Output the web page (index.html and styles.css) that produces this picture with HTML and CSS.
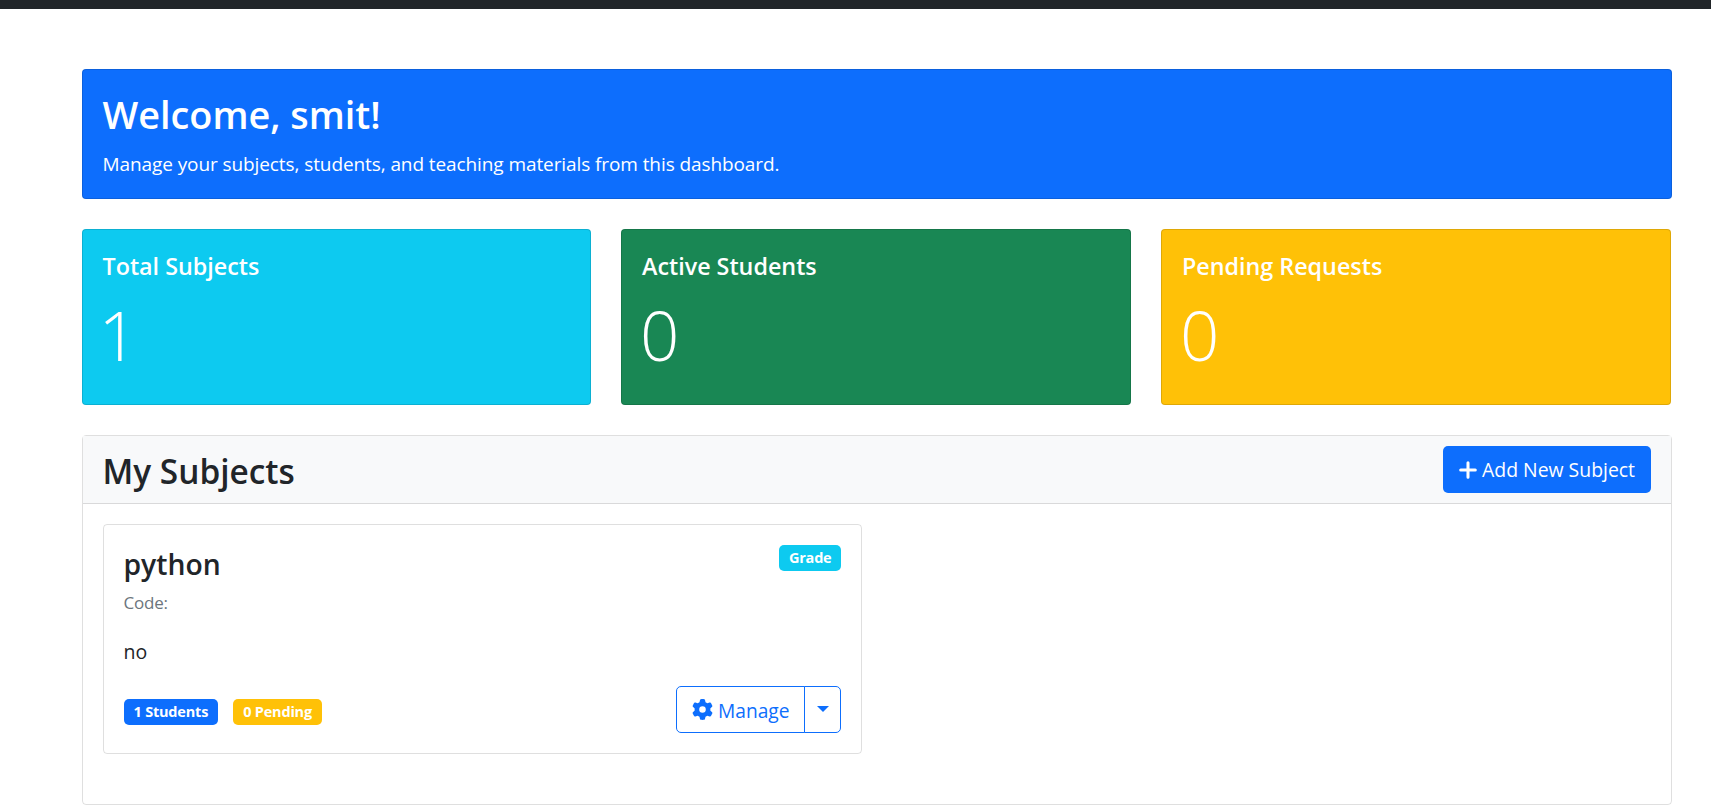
FILE: index.html
```html
<!DOCTYPE html>
<html lang="en">
<head>
<meta charset="utf-8">
<title>Teacher Dashboard</title>
<link rel="stylesheet" href="styles.css">
</head>
<body>
<div class="topbar"></div>
<main class="container">
  <section class="card welcome">
    <h1 class="welcome-title">Welcome, smit!</h1>
    <p class="welcome-text">Manage your subjects, students, and teaching materials from this dashboard.</p>
  </section>
  <section class="stats">
    <div class="card stat stat-info"><h5 class="stat-title">Total Subjects</h5><div class="stat-value">1</div></div>
    <div class="card stat stat-success"><h5 class="stat-title">Active Students</h5><div class="stat-value">0</div></div>
    <div class="card stat stat-warning"><h5 class="stat-title">Pending Requests</h5><div class="stat-value">0</div></div>
  </section>
  <section class="card subjects">
    <header class="subjects-header">
      <h3 class="subjects-title">My Subjects</h3>
      <button class="btn-add"><svg class="icon-plus" viewBox="0 0 16 16" aria-hidden="true"><path d="M8 1.5v13M1.5 8h13" fill="none" stroke="currentColor" stroke-width="2.7" stroke-linecap="round"/></svg>Add New Subject</button>
    </header>
    <div class="subjects-body">
      <article class="card subject">
        <div class="subject-top">
          <div>
            <h4 class="subject-name">python</h4>
            <div class="subject-code">Code:</div>
          </div>
          <span class="badge badge-info">Grade</span>
        </div>
        <p class="subject-desc">no</p>
        <div class="subject-foot">
          <div class="badges">
            <span class="badge badge-primary">1 Students</span>
            <span class="badge badge-warning">0 Pending</span>
          </div>
          <div class="btn-group">
            <button class="btn-manage"><svg class="icon-gear" viewBox="0 0 512 512" aria-hidden="true"><path fill="currentColor" d="M495.9 166.6c3.2 8.7.5 18.4-6.4 24.6l-43.3 39.4c1.1 8.3 1.7 16.8 1.7 25.4s-.6 17.1-1.7 25.4l43.3 39.4c6.9 6.2 9.6 15.9 6.4 24.6-4.4 11.9-9.7 23.3-15.8 34.3l-4.7 8.1c-6.6 11-14 21.4-22.1 31.2-5.9 7.2-15.7 9.6-24.5 6.8l-55.7-17.7c-13.4 10.3-28.2 18.9-44 25.4l-12.5 57.1c-2 9.1-9 16.3-18.2 17.8-13.8 2.3-28 3.5-42.5 3.5s-28.7-1.2-42.5-3.5c-9.2-1.5-16.2-8.7-18.2-17.8l-12.5-57.1c-15.8-6.5-30.6-15.1-44-25.4l-55.6 17.8c-8.8 2.8-18.6.3-24.5-6.8-8.1-9.8-15.5-20.2-22.1-31.2l-4.7-8.1c-6.1-11-11.4-22.4-15.8-34.3-3.2-8.7-.5-18.4 6.4-24.6l43.3-39.4c-1.1-8.4-1.7-16.9-1.7-25.5s.6-17.1 1.7-25.4l-43.3-39.4c-6.9-6.2-9.6-15.9-6.4-24.6 4.4-11.9 9.7-23.3 15.8-34.3l4.7-8.1c6.6-11 14-21.4 22.1-31.2 5.9-7.2 15.7-9.6 24.5-6.8l55.7 17.7c13.4-10.3 28.2-18.9 44-25.4l12.5-57.1c2-9.1 9-16.3 18.2-17.8C227.3 1.2 241.5 0 256 0s28.7 1.2 42.5 3.5c9.2 1.5 16.2 8.7 18.2 17.8l12.5 57.1c15.8 6.5 30.6 15.1 44 25.4l55.7-17.7c8.8-2.8 18.6-.3 24.5 6.8 8.1 9.8 15.5 20.2 22.1 31.2l4.7 8.1c6.1 11 11.4 22.4 15.8 34.3zM256 336a80 80 0 1 0 0-160 80 80 0 1 0 0 160z"/></svg>Manage</button>
            <button class="btn-caret" aria-label="Toggle menu"><span class="caret"></span></button>
          </div>
        </div>
      </article>
    </div>
  </section>
</main>
</body>
</html>
```
FILE: styles.css
```css
* { box-sizing: border-box; }
html, body { margin: 0; padding: 0; }
body {
  background: #fff;
  color: #212529;
  font-family: "Open Sans", "Noto Sans", sans-serif;
  font-size: 16px;
  line-height: 1.5;
  overflow: hidden;
  height: 811px;
}
.topbar { height: 9px; background: #212529; }
.container { padding: 60px 39px 0 82px; display: flex; flex-direction: column; gap: 30px; }
h1, h3, h4, h5, p { margin: 0; }
.card { border: 1px solid rgba(0,0,0,.125); border-radius: 4px; }

.welcome { background: #0d6efd; color: #fff; height: 130px; padding: 21px 20px 20px 19.5px; }
.welcome-title { font-size: 37.8px; font-weight: 600; line-height: 48px; margin-bottom: 11px; }
.welcome-text { font-size: 19px; line-height: 28px; letter-spacing: -.09px; }

.stats { display: grid; grid-template-columns: 509px 510px 510px; gap: 30px; }
.stat { height: 176px; padding: 20px; color: #fff; }
.stat-info { background: #0dcaf0; padding-left: 19.5px; }
.stat-success { background: #198754; }
.stat-warning { background: #ffc107; }
.stat-title { font-size: 23.3px; font-weight: 600; line-height: 32px; margin-bottom: 12px; }
.stat-value { font-size: 69px; font-weight: 300; line-height: 80px; margin-left: -2px; }
.stat-info .stat-value { margin-left: -4px; }

.subjects { height: 370px; }
.subjects-header {
  display: flex; justify-content: space-between; align-items: center;
  height: 68px; padding: 0 20px 0 19.5px; background: #f8f9fa;
  border-bottom: 1px solid rgba(0,0,0,.125);
}
.subjects-title { font-size: 33.4px; font-weight: 600; line-height: 46px; padding-top: 2px; }
.btn-add {
  display: flex; align-items: center; gap: 5px;
  height: 47px; padding: 0 16px;
  background: #0d6efd; color: #fff; border: 0; border-radius: 5px;
  font: inherit; font-size: 19.4px;
}
.icon-plus { width: 18px; height: 18px; }

.subjects-body { padding: 20px; }
.subject {
  width: 759px; height: 230px; padding: 20px 20px 20px 19.5px;
  display: flex; flex-direction: column;
}
.subject-top { display: flex; justify-content: space-between; align-items: flex-start; }
.subject-name { font-size: 28.3px; font-weight: 600; line-height: 38px; }
.subject-code { font-size: 17px; line-height: 26px; margin-top: 7px; color: #6c757d; letter-spacing: -.2px; }
.subject-desc { font-size: 19.5px; line-height: 28px; margin-top: 22px; }
.subject-foot { display: flex; justify-content: space-between; align-items: center; margin-top: auto; }
.badges { display: flex; gap: 15px; margin-top: 4px; }
.badge {
  display: inline-block; height: 26px; padding: 0 10px;
  border-radius: 5px; color: #fff;
  font-size: 14.5px; font-weight: 700; line-height: 26px;
  letter-spacing: -.2px;
}
.badge-info { background: #0dcaf0; padding: 0 9.5px; }
.badge-primary { background: #0d6efd; }
.badge-warning { background: #ffc107; }

.btn-group { display: flex; height: 47px; color: #0d6efd; }
.btn-manage, .btn-caret {
  background: #fff; color: inherit; border: 1px solid #0d6efd; font: inherit;
}
.btn-manage {
  display: flex; align-items: center; gap: 5px;
  width: 129px; padding: 3px 0 0 15px;
  border-radius: 5px 0 0 5px; font-size: 19.2px;
}
.btn-caret {
  width: 37px; margin-left: -1px; padding: 0;
  display: flex; align-items: center; justify-content: center;
  border-radius: 0 5px 5px 0;
}
.icon-gear { width: 21px; height: 21px; margin-top: -3px; }
.caret {
  width: 0; height: 0; margin-top: -1px;
  border-top: 6px solid currentColor;
  border-left: 6px solid transparent;
  border-right: 6px solid transparent;
}
```
